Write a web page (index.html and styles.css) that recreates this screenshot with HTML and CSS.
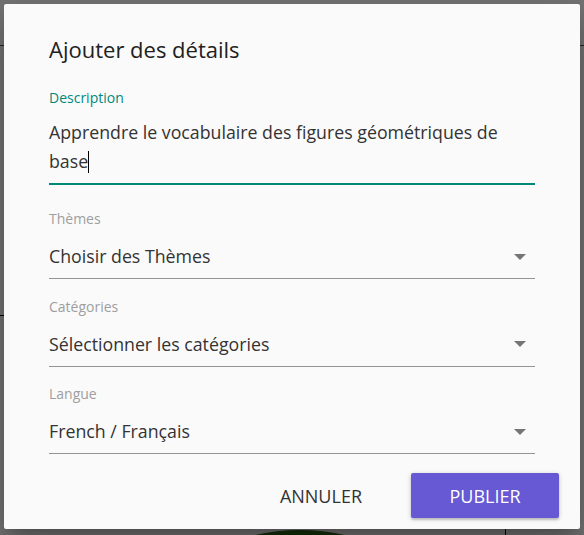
FILE: index.html
```html
<!DOCTYPE html>
<html lang="fr">
<head>
    <meta charset="UTF-8">
    <title>Ajouter des détails</title>
    <link rel="stylesheet" href="styles.css">
</head>
<body>
<div id="fond">
    <div class="barre"></div>
    <div class="trait-gauche"></div>
    <div class="feuille"></div>
    <div class="trait-bas"></div>
</div>
<div id="voile"></div>
<div id="dialogue">
    <h2 class="titre">Ajouter des détails</h2>

    <div class="champ actif">
        <label class="etiquette">Description</label>
        <div class="valeur multi">Apprendre le vocabulaire des figures géométriques de base<span class="curseur"></span></div>
    </div>

    <div class="champ">
        <label class="etiquette">Thèmes</label>
        <div class="valeur">Choisir des Thèmes <span class="fleche"></span></div>
    </div>

    <div class="champ">
        <label class="etiquette">Catégories</label>
        <div class="valeur">Sélectionner les catégories <span class="fleche"></span></div>
    </div>

    <div class="champ">
        <label class="etiquette">Langue</label>
        <div class="valeur">French / Français <span class="fleche"></span></div>
    </div>

    <div class="actions">
        <button class="bouton plat">Annuler</button>
        <button class="bouton plein">Publier</button>
    </div>
</div>
</body>
</html>
```

FILE: styles.css
```css
body {
    margin: 0;
    width: 584px;
    height: 535px;
    overflow: hidden;
    background: #fff;
    font-family: "Open Sans", "Noto Sans", sans-serif;
    position: relative;
}

#fond .barre {
    position: absolute;
    left: 0;
    top: 0;
    width: 100%;
    height: 45px;
    border-bottom: 1px solid #555;
}

#fond .trait-gauche {
    position: absolute;
    left: 0;
    top: 315px;
    width: 40px;
    height: 1px;
    background: #000;
}

#fond .feuille {
    position: absolute;
    left: 240px;
    top: 530px;
    width: 120px;
    height: 30px;
    border-radius: 50% 50% 0 0;
    background: #2e6b1e;
}

#fond .trait-bas {
    position: absolute;
    left: 505px;
    top: 528px;
    width: 1px;
    height: 10px;
    background: #000;
}

#voile {
    position: absolute;
    inset: 0;
    background: rgba(0, 0, 0, 0.54);
}

#dialogue {
    position: absolute;
    left: 4px;
    top: 4px;
    width: 576px;
    height: 525px;
    box-sizing: border-box;
    padding: 29px 45px 0 45px;
    background: #fafafa;
    border-radius: 2px;
    box-shadow: 0 11px 15px -7px rgba(0,0,0,0.2), 0 24px 38px 3px rgba(0,0,0,0.14), 0 9px 46px 8px rgba(0,0,0,0.12);
    display: flex;
    flex-direction: column;
}

.titre {
    margin: 0 0 23px 0;
    font-size: 22px;
    font-weight: 500;
    color: #212121;
    line-height: 32px;
}

.champ {
    display: flex;
    flex-direction: column;
    border-bottom: 1px solid #949494;
    margin-bottom: 17.5px;
}

.etiquette {
    font-size: 14px;
    color: #9e9e9e;
    line-height: 20px;
}

.valeur {
    font-size: 17.75px;
    color: #333;
    line-height: 29px;
    padding: 13px 0 7px 0;
    display: flex;
    justify-content: space-between;
    align-items: center;
}

.valeur.multi {
    display: block;
    padding: 10px 0 7px 0;
}

.actif {
    border-bottom: 2px solid #00897b;
    margin-bottom: 24px;
}

.actif .etiquette {
    color: #00897b;
}

.curseur {
    display: inline-block;
    width: 1px;
    height: 22px;
    background: #000;
    vertical-align: -5px;
}

.fleche {
    width: 0;
    height: 0;
    margin-right: 9px;
    border-left: 6px solid transparent;
    border-right: 6px solid transparent;
    border-top: 6px solid #757575;
}

.actions {
    display: flex;
    justify-content: flex-end;
    gap: 49px;
    margin-top: 1.5px;
    margin-right: -24px;
}

.bouton {
    font-family: inherit;
    font-size: 18px;
    text-transform: uppercase;
    border: none;
    border-radius: 2px;
    height: 45px;
    padding: 0;
    cursor: pointer;
}

.plat {
    background: transparent;
    color: #333;
}

.plein {
    width: 148px;
    background: #6759d3;
    color: #fff;
    font-weight: 500;
    box-shadow: 0 1px 5px rgba(0,0,0,0.2), 0 2px 2px rgba(0,0,0,0.14);
}
```
